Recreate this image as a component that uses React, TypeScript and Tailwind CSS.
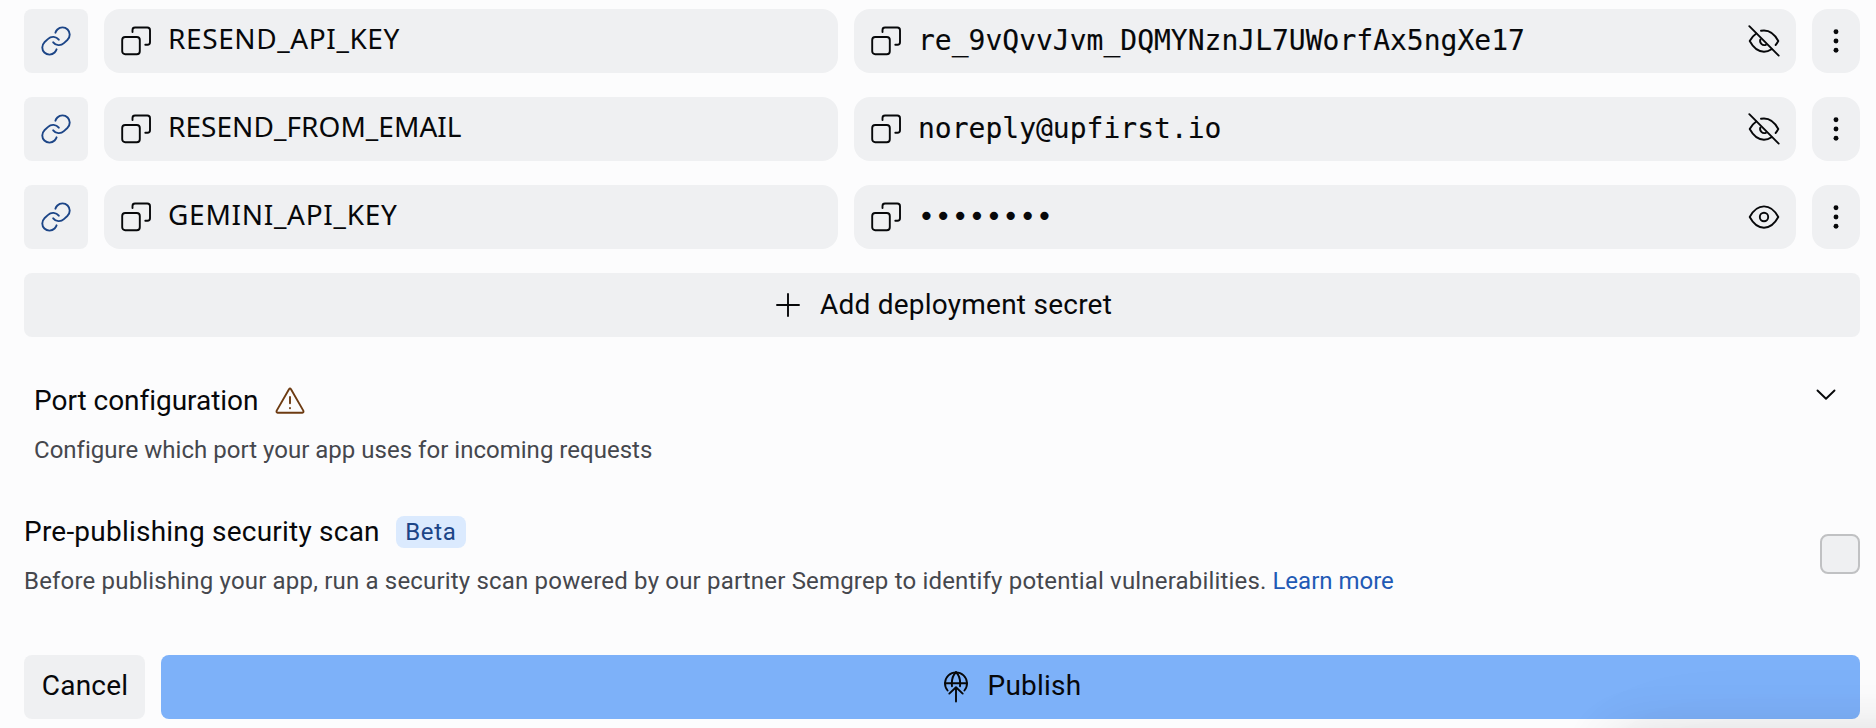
import type { ReactNode } from "react";

function Icon({ children, className = "" }: { children: ReactNode; className?: string }) {
  return (
    <svg
      viewBox="0 0 32 32"
      fill="none"
      stroke="currentColor"
      strokeWidth="1.9"
      strokeLinecap="round"
      strokeLinejoin="round"
      className={`size-8 shrink-0 ${className}`}
    >
      {children}
    </svg>
  );
}

const loop = "M15.4 7.7C15.7 6.5 16.5 5.4 17.4 4.5A7.2 7.2 0 0 1 27.6 14.7L23.9 18.1A7.2 7.2 0 0 1 13.2 17.3";

const LinkIcon = () => (
  <Icon className="text-[#1c4587]">
    <path d={loop} />
    <path d={loop} transform="rotate(180 16 16)" />
  </Icon>
);

const CopyIcon = () => (
  <Icon>
    <rect x="2.2" y="12" width="17.6" height="17.2" rx="3" />
    <path d="M12.5 7V5A2.5 2.5 0 0 1 15 2.5H27.3A2.7 2.7 0 0 1 30 5.2V17.3A2.5 2.5 0 0 1 27.5 19.8H25.3" />
  </Icon>
);

const EyeIcon = () => (
  <Icon>
    <path d="M1.7 16C5.5 9 10.4 5.4 16 5.4S26.5 9 30.3 16C26.5 23 21.6 26.7 16 26.7S5.5 23 1.7 16Z" />
    <circle cx="16" cy="16" r="4.2" />
  </Icon>
);

const EyeOffIcon = () => (
  <Icon>
    <path d="M1.3 1.2L30.7 30.6" />
    <path d="M8.3 8.5C5.6 10.3 3.4 12.9 1.7 16C5.5 23 10.4 26.7 16 26.7C18.7 26.7 21.2 25.8 23.5 24.2" />
    <path d="M13 5.8C20.3 4.4 26.2 8.4 30.3 16C29.5 17.5 28.7 18.8 27.6 20" />
    <path d="M12.4 14.4A4.2 4.2 0 0 0 17.9 19.8" />
  </Icon>
);

const KebabIcon = () => (
  <Icon>
    <g fill="currentColor" stroke="none">
      <circle cx="16" cy="6.7" r="2.45" />
      <circle cx="16" cy="16" r="2.45" />
      <circle cx="16" cy="25.3" r="2.45" />
    </g>
  </Icon>
);

const PublishIcon = () => (
  <Icon>
    <path d="M7.6 19.5A11 11 0 1 1 24.4 19.5" />
    <path d="M5 12.2H27" />
    <path d="M16 1.2C12.8 4.2 11.4 9.5 12 15.2" />
    <path d="M16 1.2C19.2 4.2 20.6 9.5 20 15.2" />
    <path d="M16 30.5V16.5M9.3 22.6L16 16.3L22.7 22.6" />
  </Icon>
);

interface Secret {
  name: string;
  nameSpacing: string;
  value: string;
  visible: boolean;
}

const secrets: Secret[] = [
  { name: "RESEND_API_KEY", nameSpacing: "tracking-[0.6px]", value: "re_9vQvvJvm_DQMYNznJL7UWorfAx5ngXe17", visible: true },
  { name: "RESEND_FROM_EMAIL", nameSpacing: "tracking-[0.05px]", value: "noreply@upfirst.io", visible: true },
  { name: "GEMINI_API_KEY", nameSpacing: "tracking-[0.72px]", value: "••••••••", visible: false },
];

function SecretRow({ secret }: { secret: Secret }) {
  return (
    <div className="flex h-16 gap-4">
      <button className="flex w-16 shrink-0 items-center justify-center rounded-lg bg-[#eff0f2]">
        <LinkIcon />
      </button>
      <div className="flex w-[734px] shrink-0 items-center gap-4 rounded-2xl bg-[#eff0f2] px-4">
        <CopyIcon />
        <span className={`pb-1.5 font-['Noto_Sans',sans-serif] ${secret.nameSpacing}`}>{secret.name}</span>
      </div>
      <div className="flex min-w-0 flex-1 items-center gap-4 rounded-2xl bg-[#eff0f2] px-4">
        <CopyIcon />
        <span className="flex-1 font-['DejaVu_Sans_Mono',monospace] [-webkit-text-stroke:0.12px_#07080a]">
          {secret.value}
        </span>
        {secret.visible ? <EyeOffIcon /> : <EyeIcon />}
      </div>
      <button className="flex w-12 shrink-0 items-center justify-center rounded-2xl bg-[#eff0f2]">
        <KebabIcon />
      </button>
    </div>
  );
}

export default function App() {
  return (
    <main className="relative h-[728px] w-full overflow-hidden bg-[#fcfcfd] px-4 pt-[9px] pl-6 font-['Roboto',sans-serif] text-[28px] leading-8 text-[#07080a]">
      <div className="flex flex-col gap-6">
        {secrets.map((secret) => (
          <SecretRow key={secret.name} secret={secret} />
        ))}
        <button className="flex h-16 items-center justify-center gap-4 rounded-lg bg-[#eff0f2]">
          <Icon>
            <path d="M16 5V27M5 16H27" />
          </Icon>
          <span className="tracking-[0.24px]">Add deployment secret</span>
        </button>
      </div>

      <section className="mt-12 flex justify-between pr-[18px] pl-2.5">
        <div>
          <h2 className="flex items-center gap-4">
            <span className="tracking-[-0.04px]">Port configuration</span>
            <Icon className="text-[#6d3b12]">
              <path d="M15 4.2Q16 2.8 17 4.2L29.3 25.6Q30 27.6 28.3 27.8H3.7Q2 27.6 2.7 25.6Z" />
              <path d="M16 12V18.3M16 23V23.2" />
            </Icon>
          </h2>
          <p className="mt-[17px] text-2xl leading-8 tracking-[0.02px] text-[#45474d]">
            Configure which port your app uses for incoming requests
          </p>
        </div>
        <Icon className="-mt-[6px]">
          <path d="M7.5 11.5L16 19.8L24.5 11.5" />
        </Icon>
      </section>

      <section className="mt-[50px] flex items-start justify-between">
        <div>
          <h2 className="flex items-center gap-4">
            <span className="tracking-[0.22px]">Pre-publishing security scan</span>
            <span className="flex h-8 w-[70px] items-center justify-center rounded-lg bg-[#dbeafe] text-2xl leading-8 tracking-[0.6px] text-[#1c4587]">
              Beta
            </span>
          </h2>
          <p className="mt-[17px] text-2xl leading-8 text-[#45474d]">
            <span className="tracking-[0.18px]">
              Before publishing your app, run a security scan powered by our partner Semgrep to identify potential
              vulnerabilities.
            </span>{" "}
            <a className="text-[#2159b5]">Learn more</a>
          </p>
        </div>
        <div className="mt-[18px] size-10 rounded-lg border-2 border-[#c0c1c3] bg-[#eff0f2]" />
      </section>

      <div className="mt-[58px] flex h-16 gap-4">
        <button className="w-[121px] rounded-lg bg-[#eff0f2] pb-0.5 pl-px tracking-[0.2px]">Cancel</button>
        <button className="flex flex-1 items-center justify-center gap-4 rounded-lg bg-[#7db1f9]">
          <PublishIcon />
          <span className="pb-0.5 tracking-[0.23px]">Publish</span>
        </button>
      </div>

      <div className="pointer-events-none absolute top-[738px] left-[1612px] h-80 w-[480px] rounded-3xl shadow-[0_0_56px_rgba(0,0,0,0.15),0_0_120px_rgba(0,0,0,0.03)]" />
    </main>
  );
}
